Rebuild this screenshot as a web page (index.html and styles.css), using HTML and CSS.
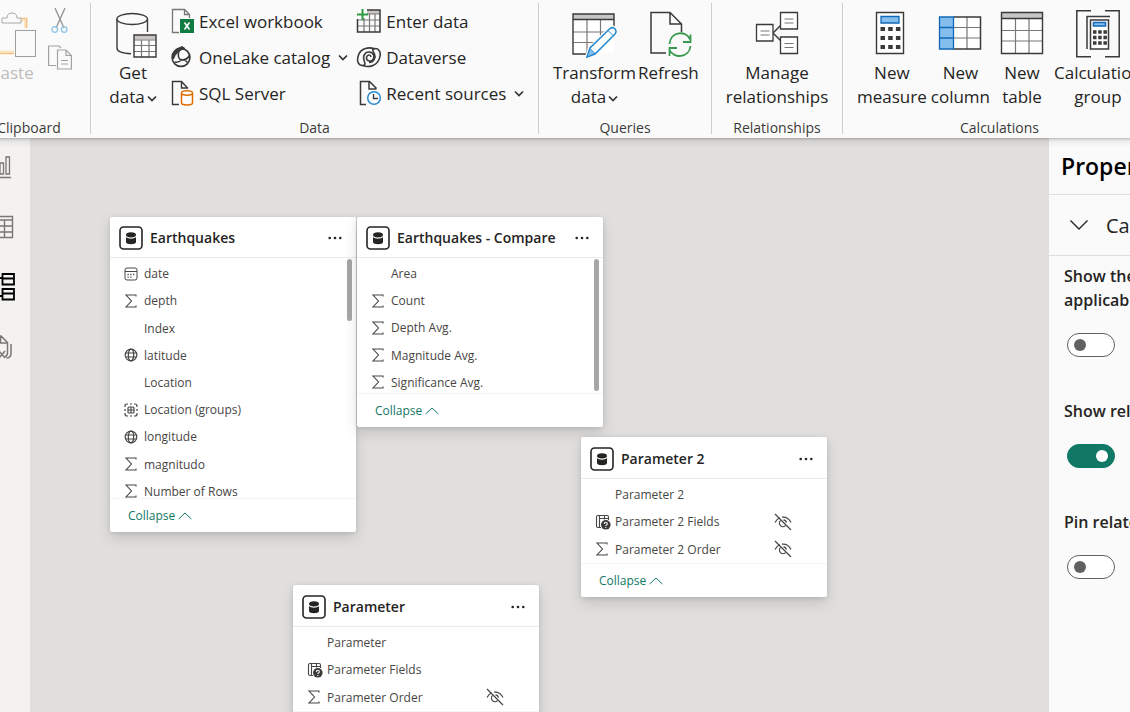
FILE: index.html
```html
<!DOCTYPE html>
<html lang="en">
<head>
<meta charset="utf-8">
<title>Model view</title>
<link rel="stylesheet" href="styles.css">
</head>
<body>
<svg class="sprite" aria-hidden="true">
  <symbol id="i-chev" viewBox="0 0 10 10"><path d="M1 3.500l4 4 4-4" fill="none" stroke="#333" stroke-width="1.700"/></symbol>
  <symbol id="i-up" viewBox="0 0 14 8"><path d="M.7 7L7 1l6.300 6" fill="none" stroke="currentColor"/></symbol>
  <symbol id="i-db" viewBox="0 0 24 24"><rect x="1" y="1" width="22" height="22" rx="3.500" fill="#fff" stroke="#252423" stroke-width="1.600"/><ellipse cx="12" cy="8.800" rx="5" ry="2.600" fill="#252423"/><path d="M7 11c2 2.200 8 2.200 10 0v5c0 3-10 3-10 0z" fill="#252423"/></symbol>
  <symbol id="i-dots" viewBox="0 0 14 4"><g fill="#252423"><circle cx="1.700" cy="2" r="1.300"/><circle cx="7" cy="2" r="1.300"/><circle cx="12.300" cy="2" r="1.300"/></g></symbol>
  <symbol id="i-sum" viewBox="0 0 14 14"><path d="M12 2.500V1H2l5.500 6L2 13h10v-1.500" fill="none" stroke="#484644" stroke-width="1.100"/></symbol>
  <symbol id="i-date" viewBox="0 0 14 14"><rect x="1" y="1" width="12" height="12" rx="2" fill="none" stroke="#484644"/><path d="M1 4.500h12" stroke="#484644"/><path d="M3.500 7.500h1.200m1.600 0h1.200m1.600 0h1.200M3.500 10.200h1.200m1.600 0h1.200" stroke="#484644" stroke-width="1.300"/></symbol>
  <symbol id="i-globe" viewBox="0 0 14 14"><g fill="none" stroke="#484644" stroke-width="1.200"><circle cx="7" cy="7" r="5.800"/><ellipse cx="7" cy="7" rx="2.700" ry="5.800"/><path d="M1.500 5h11m-11 4h11"/></g></symbol>
  <symbol id="i-group" viewBox="0 0 14 14"><g fill="none" stroke="#484644" stroke-width="1.200"><path d="M1 4V3q0-2 2-2h1m2 0h2m2 0h1q2 0 2 2v1m0 2v2m0 2v1q0 2-2 2h-1m-2 0H6m-2 0H3q-2 0-2-2v-1m0-2V6"/><rect x="4" y="4" width="6" height="6" rx="1"/><path d="M7 4v6M4 7h6"/></g></symbol>
  <symbol id="i-param" viewBox="0 0 16 16"><g fill="none" stroke="#484644" stroke-width="1.100"><path d="M6 13.500H3q-1.500 0-1.500-1.500V3q0-1.500 1.500-1.500h9q1.500 0 1.500 1.500v3M4.500 1.500v12M4.500 4.500h9M9.500 1.500v4"/></g><circle cx="10.800" cy="10.800" r="4.800" fill="#3b3a39"/><path d="M9.300 9.900q0-1.600 1.500-1.600t1.500 1.400q0 .8-.8 1.200t-.7 1.100m0 1v1" fill="none" stroke="#fff" stroke-width="1.100"/></symbol>
  <symbol id="i-hidden" viewBox="0 0 18 18"><g fill="none" stroke="#484644" stroke-width="1.200"><path d="M1 1l16 16M1 9.500Q3 5.800 6 4.800M8 4.200q6-.6 9 5.300M6.500 7.700a3.400 3.400 0 1 0 5 5M9.500 6.800q2.600.3 2.900 2.800"/></g></symbol>
</svg>
<div class="app">
  <header class="ribbon">
    <section class="group clipboard">
      <div class="tools">
        <button class="big muted"><svg width="48" height="48" viewBox="0 0 48 48" fill="none"><path d="M9 9.500H4v33h22M33 9.500h5V18" stroke="#fbe3c0" stroke-width="4"/><path d="M33 8.500h5.500V18M4 43.500h22" stroke="#f3bd84"/><path d="M14 13V8h5q0-5 5-5t5 5h4v5z" fill="#fafafa" stroke="#a9a8a6"/><rect x="27.500" y="20.500" width="20" height="26" fill="#fafafa" stroke="#a09f9d"/></svg><span>Paste</span></button>
        <div class="minis">
          <button aria-label="Cut"><svg width="24" height="28" viewBox="0 0 24 28" fill="none"><path d="M7 1l9 20M17 1L8 21" stroke="#979593" stroke-width="1.400"/><circle cx="6.800" cy="22.500" r="2.800" stroke="#90c6e4" stroke-width="1.300"/><circle cx="16.200" cy="22.500" r="2.800" stroke="#90c6e4" stroke-width="1.300"/></svg></button>
          <button aria-label="Copy"><svg width="24" height="26" viewBox="0 0 24 26" fill="none" stroke="#a3a2a0" stroke-width="1.200"><path d="M8 20.500H.6V1H11l2 2"/><path d="M9.500 5H18l5.400 5.500V24H9.500zM18 5v5.500h5.400M13 15.500h7m-7 3.500h7"/></svg></button>
        </div>
      </div>
      <h2>Clipboard</h2>
    </section>
    <section class="group data">
      <div class="tools">
        <button class="big"><svg width="50" height="48" viewBox="0 0 50 48" fill="none"><path d="M9 9v29c0 3.500 6 5.500 14 5.700M39.500 9v13" stroke="#3b3a39" stroke-width="1.400"/><ellipse cx="24.200" cy="9" rx="15.300" ry="5.500" stroke="#3b3a39" stroke-width="1.400"/><path d="M26 25h22v22H26z" fill="#fff"/><path d="M26 25h22v4.500H26z" fill="#c8c6c4"/><path d="M26 30h22M26 35.500h22M26 41.500h22M33.500 30v17M41 30v17" stroke="#797775" stroke-width="1.200"/><path d="M26 25h22v22H26z" stroke="#3b3a39" stroke-width="1.400"/></svg><span>Get<br>data<svg class="chev"><use href="#i-chev"/></svg></span></button>
        <div class="list">
          <button><svg width="24" height="26" viewBox="0 0 24 26" fill="none"><path d="M8 24.500H1.500V1.500h12l5 5V10M13.500 1.500v5h5" stroke="#797775" stroke-width="1.300"/><rect x="9" y="11" width="14" height="14" fill="#107c41"/><path d="M13.500 14.500l5 7m0-7l-5 7" stroke="#fff" stroke-width="1.600"/></svg>Excel workbook</button>
          <button><svg width="24" height="26" viewBox="0 0 24 26" fill="none" stroke="#3b3a39"><circle cx="10" cy="13.500" r="8.900" stroke-width="1.700"/><path d="M1.500 13Q2 5 9 3.500L11 2.500l3 2Q5 7 2.500 15z" fill="#3b3a39"/><path d="M8 6.500q-2.500 8.500 3 9.500 5 0 7.500-4.500M3.500 18q4 1 7-2 3-1 6 2.500" stroke-width="1.600"/></svg>OneLake catalog<svg class="chev"><use href="#i-chev"/></svg></button>
          <button><svg width="24" height="26" viewBox="0 0 24 26" fill="none"><path d="M8 24.500H1.500V1.500h9l6.500 7M10.500 1.500V8H17" stroke="#3b3a39" stroke-width="1.400"/><path d="M10.500 13v10c0 2.500 11 2.500 11 0V13" fill="#fff" stroke="#e06c00" stroke-width="1.500"/><ellipse cx="16" cy="13" rx="5.500" ry="2.200" fill="#fff" stroke="#e06c00" stroke-width="1.500"/></svg>SQL Server</button>
        </div>
        <div class="list wide">
          <button><svg width="26" height="26" viewBox="0 0 26 26" fill="none"><path d="M11 2h13v4H11z" fill="#c8c6c4"/><path d="M2 12h22M2 18h22M8 10v14M13.500 6v18M19 6v18M11 6h13" stroke="#797775" stroke-width="1.200"/><path d="M11 2h13v22H1.500V11" stroke="#3b3a39" stroke-width="1.500"/><path d="M6.500 1v11M1 6.500h11" stroke="#2f9a46" stroke-width="2"/></svg>Enter data</button>
          <button><svg width="26" height="26" viewBox="0 0 26 26" fill="none" stroke="#3b3a39" stroke-width="1.600"><path d="M19 5C13 2.500 5 4 2.500 11S3 21.500 6.500 21.500 9 19 8 16s0-8 5-8 6 5.500 3.500 8-6.500.5-6-2.500 4-3.500 4.500-.5"/><path d="M6.500 21.500c6 2 13.500 1 16.500-6S23 4.500 19 4.500 17 7 18.500 10s-.5 8.500-5.500 8.500"/></svg>Dataverse</button>
          <button><svg width="26" height="26" viewBox="0 0 26 26" fill="none"><path d="M10 24.500H4.500V1.500h9l7 7M13 1.500V9h7.500" stroke="#3b3a39" stroke-width="1.500"/><circle cx="18" cy="18" r="6.300" fill="#fff" stroke="#2488cf" stroke-width="1.500"/><path d="M17.500 14v4.500H22" stroke="#3b3a39" stroke-width="1.400"/></svg>Recent sources<svg class="chev"><use href="#i-chev"/></svg></button>
        </div>
      </div>
      <h2>Data</h2>
    </section>
    <section class="group queries">
      <div class="tools">
        <button class="big"><svg width="48" height="48" viewBox="0 0 48 48" fill="none"><path d="M3 4h41v39H3z" fill="#fff"/><path d="M3 4h41v5H3z" fill="#c8c6c4"/><path d="M3 22h41M3 32.500h31M17 9v34M30.500 9v26" stroke="#797775" stroke-width="1.200"/><path d="M23 44H3V4h41v14M3 9.500h41" stroke="#3b3a39" stroke-width="1.400"/><path d="M17 47l3-9 20-19.500q3-2 5 .5t0 5L25 44z" fill="#fff" stroke="#fafafa" stroke-width="4"/><path d="M17 47l3-9 20-19.500q3-2 5 .5t0 5L25 44z" fill="#fff" stroke="#2488cf" stroke-width="1.500"/><path d="M17 47l3-8.500 5 5z" fill="#83beec" stroke="#2488cf"/><path d="M38 20.500l5 5" stroke="#2488cf"/></svg><span>Transform<br>data<svg class="chev"><use href="#i-chev"/></svg></span></button>
        <button class="big"><svg width="48" height="48" viewBox="0 0 48 48" fill="none"><path d="M22 43H7V2.500h19L37.500 14v8M26 2.500V14h11.500" stroke="#3b3a39" stroke-width="1.500"/><path d="M25.500 34c1-13 17-14 21-4M46.500 24.500V32H39M46.500 36c-1 12-17 13-21 4M25.500 46v-8H33" stroke="#389a4e" stroke-width="1.800"/></svg><span>Refresh</span></button>
      </div>
      <h2>Queries</h2>
    </section>
    <section class="group relations">
      <div class="tools">
        <button class="big"><svg width="48" height="48" viewBox="0 0 48 48" fill="none"><path d="M20 23l8-8M20 23l8 8" stroke="#3b3a39" stroke-width="1.500"/><path d="M3.500 14.500h16.500v16.500H3.500zM27.500 2.500h17V19h-17zM27.500 27h17v16.500h-17z" fill="#fff" stroke="#3b3a39" stroke-width="1.300"/><path d="M7.500 21h9m-9 4h9M31.500 9h9m-9 4h9m-9 20.500h9m-9 4h9" stroke="#797775" stroke-width="1.100"/></svg><span>Manage<br>relationships</span></button>
      </div>
      <h2>Relationships</h2>
    </section>
    <section class="group calcs">
      <div class="tools">
        <button class="big"><svg width="48" height="48" viewBox="0 0 48 48" fill="none"><path d="M8.500 2.500h27v41h-27z" fill="#fff" stroke="#3b3a39" stroke-width="1.400"/><path d="M13 6.500h18V13H13z" fill="#83beec" stroke="#1068b8" stroke-width="1.300"/><path d="M12.500 19h20M12.500 28h20M12.500 37h20" stroke="#3b3a39" stroke-width="4" stroke-dasharray="4.500 3.200"/></svg><span>New<br>measure</span></button>
        <button class="big"><svg width="48" height="48" viewBox="0 0 48 48" fill="none"><path d="M3.500 7h41v32h-41z" fill="#fff"/><path d="M3.500 7h14v32h-14z" fill="#83beec"/><path d="M17.500 17.500h27M17.500 28h27M31 7v32" stroke="#797775" stroke-width="1.200"/><path d="M17.500 7h27v32h-27" stroke="#3b3a39" stroke-width="1.500"/><path d="M3.500 7h14v32h-14zM3.500 17.500h14M3.500 28h14" stroke="#1068b8" stroke-width="1.300"/></svg><span>New<br>column</span></button>
        <button class="big"><svg width="48" height="48" viewBox="0 0 48 48" fill="none"><path d="M3.500 2.500h41v41h-41z" fill="#fff"/><path d="M3.500 2.500h41v6h-41z" fill="#c8c6c4"/><path d="M3.500 20.500h41M3.500 31h41M17.500 8v35M31 8v35" stroke="#797775" stroke-width="1.200"/><path d="M3.500 2.500h41v41h-41zM3.500 8.500h41" stroke="#3b3a39" stroke-width="1.400"/></svg><span>New<br>table</span></button>
        <button class="big"><svg width="48" height="48" viewBox="0 0 48 48" fill="none" stroke="#3b3a39" stroke-width="1.500"><path d="M17 .8H2.800v46H17M31 .8h14.200v46H31M13 39V6.500h23" /><path d="M16.500 10h18v29h-18z" fill="#fff"/><path d="M19.500 12.500h12v3.500h-12z" fill="#83beec" stroke="#1068b8"/><path d="M19 22h14M19 27.500h14M19 33h14" stroke-width="3.500" stroke-dasharray="3.500 1.700"/></svg><span>Calculation<br>group</span></button>
      </div>
      <h2>Calculations</h2>
    </section>
  </header>
  <div class="work">
    <nav class="views">
      <button aria-label="Report view"><svg width="32" height="32" viewBox="0 0 32 32" fill="none" stroke="#797775" stroke-width="1.300"><path d="M2 26.500h26M5 23V16h4v7zM10 23V8h4v15zM17 23V12h3.500v11zM23 23V6h3.500v17z"/></svg></button>
      <button aria-label="Table view"><svg width="32" height="32" viewBox="0 0 32 32" fill="none" stroke="#797775" stroke-width="1.400"><path d="M5 5.500h24.500v21H5zM5 9h24.500M5 15h24.500M5 21h24.500M13 9v17.500M21.500 9v17.500"/></svg></button>
      <button aria-label="Model view" class="current"><svg width="32" height="32" viewBox="0 0 32 32" fill="none" stroke="#000" stroke-width="1.800"><path d="M3 10h10v12H3zM3 14h10M13 13h3V7h3.500M13 19h3v6h3.500"/><path d="M19.500 3H31v10.500H19.500zM19.500 7.500H31M19.500 18H31v10.500H19.500zM19.500 22.500H31"/></svg></button>
      <button aria-label="DAX query view"><svg width="32" height="32" viewBox="0 0 32 32" fill="none" stroke="#797775" stroke-width="1.500"><path d="M8 17V5h10l6.500 6.500V22q0 3-3 4M17.500 5v7h7M28 13v9q0 5-4.500 5M8 27l4-8m4 1l6 7m0-7l-6 7"/></svg></button>
    </nav>
    <main class="canvas">
      <article class="card quakes">
        <header><svg class="db"><use href="#i-db"/></svg><h3>Earthquakes</h3><button aria-label="More options"><svg class="dots"><use href="#i-dots"/></svg></button></header>
        <div class="scroller"><ul class="nine">
          <li><svg><use href="#i-date"/></svg>date</li>
          <li><svg><use href="#i-sum"/></svg>depth</li>
          <li><svg></svg>Index</li>
          <li><svg><use href="#i-globe"/></svg>latitude</li>
          <li><svg></svg>Location</li>
          <li><svg><use href="#i-group"/></svg>Location (groups)</li>
          <li><svg><use href="#i-globe"/></svg>longitude</li>
          <li><svg><use href="#i-sum"/></svg>magnitudo</li>
          <li><svg><use href="#i-sum"/></svg>Number of Rows</li>
        </ul><span class="thumb"></span></div>
        <footer><button>Collapse<svg class="up"><use href="#i-up"/></svg></button></footer>
      </article>
      <article class="card compare">
        <header><svg class="db"><use href="#i-db"/></svg><h3>Earthquakes - Compare</h3><button aria-label="More options"><svg class="dots"><use href="#i-dots"/></svg></button></header>
        <div class="scroller"><ul class="five">
          <li><svg></svg>Area</li>
          <li><svg><use href="#i-sum"/></svg>Count</li>
          <li><svg><use href="#i-sum"/></svg>Depth Avg.</li>
          <li><svg><use href="#i-sum"/></svg>Magnitude Avg.</li>
          <li><svg><use href="#i-sum"/></svg>Significance Avg.</li>
        </ul><span class="thumb"></span></div>
        <footer><button>Collapse<svg class="up"><use href="#i-up"/></svg></button></footer>
      </article>
      <article class="card param2">
        <header><svg class="db"><use href="#i-db"/></svg><h3>Parameter 2</h3><button aria-label="More options"><svg class="dots"><use href="#i-dots"/></svg></button></header>
        <div class="scroller"><ul class="three">
          <li><svg></svg>Parameter 2</li>
          <li><svg class="table"><use href="#i-param"/></svg>Parameter 2 Fields<svg class="hid"><use href="#i-hidden"/></svg></li>
          <li><svg><use href="#i-sum"/></svg>Parameter 2 Order<svg class="hid"><use href="#i-hidden"/></svg></li>
        </ul></div>
        <footer><button>Collapse<svg class="up"><use href="#i-up"/></svg></button></footer>
      </article>
      <article class="card param">
        <header><svg class="db"><use href="#i-db"/></svg><h3>Parameter</h3><button aria-label="More options"><svg class="dots"><use href="#i-dots"/></svg></button></header>
        <div class="scroller"><ul class="three">
          <li><svg></svg>Parameter</li>
          <li><svg class="table"><use href="#i-param"/></svg>Parameter Fields</li>
          <li><svg><use href="#i-sum"/></svg>Parameter Order<svg class="hid"><use href="#i-hidden"/></svg></li>
        </ul></div>
        <footer></footer>
      </article>
    </main>
    <aside class="panel">
      <h2>Properties</h2>
      <button class="section"><svg width="20" height="12" viewBox="0 0 20 12"><path d="M1.500 1.500L10 10l8.500-8.500" fill="none" stroke="#252423" stroke-width="1.400"/></svg>Cards</button>
      <div class="options">
        <div class="option"><label for="o1">Show the database in the header when applicable</label><input type="checkbox" id="o1"></div>
        <div class="option"><label for="o2">Show related fields when card is collapsed</label><input type="checkbox" id="o2" checked></div>
        <div class="option"><label for="o3">Pin related fields to top of card</label><input type="checkbox" id="o3"></div>
      </div>
    </aside>
  </div>
</div>
</body>
</html>
```

FILE: styles.css
```css
* { box-sizing: border-box; }
body {
  margin: 0;
  height: 100vh;
  overflow: hidden;
  font-family: "Open Sans", "Noto Sans", sans-serif;
  color: #252423;
  background: #e0dfdd;
}
button {
  font: inherit;
  color: inherit;
  background: none;
  border: 0;
  padding: 0;
}
h2, h3, ul { margin: 0; padding: 0; }
svg { flex: none; }
.sprite { display: none; }

/* The window shows a scrolled part of the application, cut on both sides. */
.app {
  display: flex;
  flex-direction: column;
  height: 100%;
  margin-left: -32px;
  margin-right: -301px;
}

.ribbon {
  display: flex;
  height: 138px;
  padding: 3px 0 0;
  background: #fafafa;
  box-shadow: 0 0 3px rgba(0, 0, 0, .35), 0 2px 8px rgba(0, 0, 0, .15);
  z-index: 1;
}
.group {
  display: flex;
  flex-direction: column;
  justify-content: space-between;
  flex: none;
  border-right: 1px solid #d0cecc;
  margin-bottom: 4px;
}
.group h2 {
  font-size: 14px;
  font-weight: 400;
  line-height: 20px;
  height: 16px;
  text-align: center;
  color: #3b3a39;
}
.tools { display: flex; }
.clipboard { width: 123px; }
.data { width: 448px; }
.queries { width: 173px; }
.relations { width: 131px; }
.calcs { width: 314px; }

.big {
  display: flex;
  flex-direction: column;
  align-items: center;
  gap: 3px;
  padding-top: 7px;
  font-size: 17px;
  line-height: 24px;
  text-align: center;
}
.muted { color: #bebcba; }
.chev { width: 10px; height: 10px; margin-left: 4px; }
.big .chev { margin-left: 2px; }
.clipboard .tools { padding-left: 20px; }
.minis { display: flex; flex-direction: column; gap: 10px; padding: 4px 0 0 12px; }
.minis svg { display: block; }
.data .tools { padding-left: 15px; }
.data .big { width: 54px; }
.list { display: flex; flex-direction: column; padding-left: 11px; }
.list button {
  display: flex;
  align-items: center;
  gap: 4px;
  height: 36px;
  font-size: 17px;
  white-space: nowrap;
}
.list.wide { padding-left: 8px; }
.queries .tools { padding-left: 14px; gap: 2px; }
.relations .tools { justify-content: center; }
.calcs .tools { padding-left: 14px; gap: 4px; }
.calcs .big { min-width: 56px; }

.work { display: flex; flex: 1; min-height: 0; }
.views {
  display: flex;
  flex-direction: column;
  width: 62px;
  background: #f3f2f1;
}
.views button { height: 60px; }
.views svg { display: block; margin: 0 auto 2px; }

.canvas { position: relative; flex: 1; overflow: hidden; }
.card {
  position: absolute;
  width: 246px;
  background: #fff;
  border-radius: 2px;
  box-shadow: 0 6px 14px rgba(0, 0, 0, .13), 0 1px 4px rgba(0, 0, 0, .11);
}
.quakes { left: 80px; top: 79px; }
.compare { left: 327px; top: 79px; }
.param2 { left: 551px; top: 299px; }
.param { left: 263px; top: 447px; }
.card header {
  display: flex;
  align-items: center;
  gap: 7px;
  height: 41px;
  padding: 2px 14px 0 9px;
  border-bottom: 1px solid #edebe9;
}
.param2 header, .param header { height: 42px; }
.card h3 { flex: 1; font-size: 14px; font-weight: 600; line-height: 20px; }
.card header button { display: flex; }
.db { width: 24px; height: 24px; }
.dots { width: 14px; height: 4px; }
.scroller { position: relative; overflow: hidden; }
.quakes .scroller { height: 240px; }
.compare .scroller { height: 135px; }
.param2 .scroller, .param .scroller { height: 84px; }
.card ul { display: grid; grid-auto-rows: 1fr; padding-top: 2px; list-style: none; }
.nine { height: 247px; }
.five { height: 138px; }
.card .three { height: 84px; padding-top: 2px; }
.card li {
  display: flex;
  align-items: center;
  gap: 6px;
  padding-left: 14px;
  font-size: 12px;
  color: #484644;
}
.card li svg { width: 14px; height: 14px; }
.card li .table { width: 16px; height: 16px; margin-right: -2px; }
.card li .hid { width: 18px; height: 18px; margin: 0 35px 0 auto; }
.thumb {
  position: absolute;
  right: 4px;
  top: 1px;
  width: 5px;
  height: 62px;
  border-radius: 3px;
  background: #a6a6a6;
}
.compare .thumb { height: 132px; }
.card footer {
  min-height: 34px;
  padding: 0 18px;
  border-top: 1px solid #f5f4f3;
}
.card footer button {
  display: flex;
  align-items: center;
  gap: 3px;
  height: 33px;
  font-size: 12px;
  color: #117865;
}
.up { width: 14px; height: 8px; }

.panel { width: 382px; background: #fafafa; }
.panel h2 {
  padding: 0 12px;
  font-size: 23px;
  font-weight: 600;
  line-height: 56px;
  color: #000;
  border-bottom: 1px solid #e1dfdd;
}
.section {
  display: flex;
  align-items: center;
  gap: 17px;
  width: 100%;
  height: 61px;
  padding: 0 20px;
  font-size: 20px;
  border-bottom: 1px solid #e1dfdd;
}
.options { display: grid; gap: 42px; padding: 8px 15px; }
.option { display: grid; gap: 21px; }
.option label { font-size: 16px; font-weight: 600; line-height: 24px; }
.option input {
  appearance: none;
  display: flex;
  align-items: center;
  width: 48px;
  height: 24px;
  margin: 0 3px;
  padding: 0 6px;
  border: 1px solid #616161;
  border-radius: 12px;
  background: #fff;
}
.option input::before {
  content: "";
  width: 12px;
  height: 12px;
  border-radius: 50%;
  background: #616161;
}
.option input:checked {
  justify-content: flex-end;
  border-color: #117865;
  background: #117865;
}
.option input:checked::before { background: #fff; }
```
